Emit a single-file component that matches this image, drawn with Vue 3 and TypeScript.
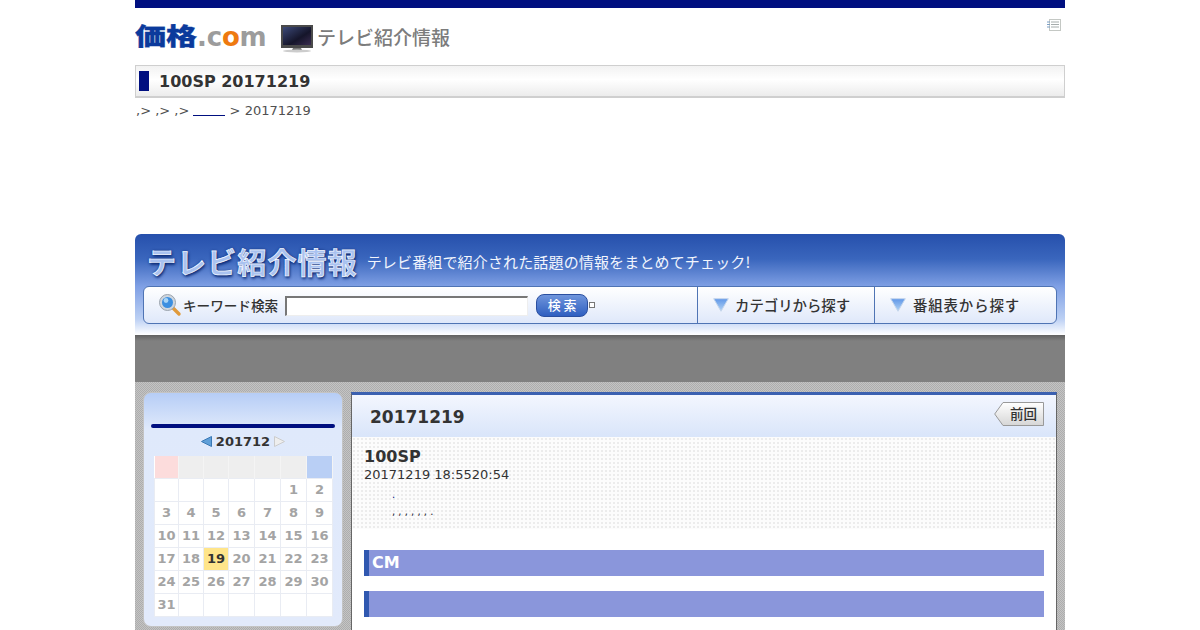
<script setup lang="ts">
const rows: (number | null)[][] = [
  [null, null, null, null, null, 1, 2],
  [3, 4, 5, 6, 7, 8, 9],
  [10, 11, 12, 13, 14, 15, 16],
  [17, 18, 19, 20, 21, 22, 23],
  [24, 25, 26, 27, 28, 29, 30],
  [31, null, null, null, null, null, null],
]
const heads = ['sun', '', '', '', '', '', 'sat']
</script>

<template>
  <div class="page">
    <div class="topbar"></div>
    <div class="logo-row">
      <div class="logo">
        <span class="kakaku">価格</span><span class="dotcom">.c<b>o</b>m</span>
      </div>
      <svg class="tv" width="34" height="30" viewBox="0 0 34 30">
        <defs>
          <linearGradient id="scr" x1="0" y1="0" x2="1" y2="1">
            <stop offset="0" stop-color="#3c4a78" />
            <stop offset="0.6" stop-color="#15152a" />
            <stop offset="1" stop-color="#3a2c50" />
          </linearGradient>
        </defs>
        <rect x="1" y="1" width="32" height="23" fill="#4a4a4a" />
        <rect x="3" y="3" width="28" height="18" fill="url(#scr)" />
        <path d="M13 24h8l1 2h-10z" fill="#777" />
        <ellipse cx="17" cy="27" rx="14" ry="1.5" fill="#ccc" />
      </svg>
      <span class="section-name">テレビ紹介情報</span>
      <svg class="memo" width="16" height="16" viewBox="0 0 16 16">
        <rect x="3.5" y="2.5" width="11" height="11" fill="#fff" stroke="#c4c8c4" />
        <path d="M5 5h8M5 7.5h8M5 10h8" stroke="#a6acac" />
        <path d="M1 5h3M1 7.5h3M1 10h3" stroke="#7d9fc4" />
      </svg>
    </div>
    <div class="title-bar">
      <span class="title-mark"></span>
      <h1>100SP 20171219</h1>
    </div>
    <div class="crumbs">,&gt; ,&gt; ,&gt; <a class="crumb-link"></a> &gt; 20171219</div>

    <header class="hero">
      <div class="hero-top">
        <span class="hero-title">テレビ紹介情報</span>
        <span class="hero-sub">テレビ番組で紹介された話題の情報をまとめてチェック!</span>
      </div>
      <div class="nav">
        <div class="nav-search">
          <svg class="lens" width="24" height="24" viewBox="0 0 24 24">
            <path d="M14 14l7 7" stroke="#e09a3c" stroke-width="3.4" stroke-linecap="round" />
            <circle cx="9.5" cy="9.5" r="8" fill="#cfd6de" stroke="#9aa3ad" />
            <circle cx="9.5" cy="9.5" r="5.5" fill="#3b8ee0" />
            <circle cx="8" cy="7.5" r="2.4" fill="#a8d4f6" />
          </svg>
          <span class="kw">キーワード検索</span>
          <span class="input"></span>
          <span class="btn">検 索</span>
          <span class="check"></span>
        </div>
        <div class="nav-item cat">
          <svg width="16" height="14" viewBox="0 0 16 14">
            <defs>
              <linearGradient id="tri" x1="0" y1="0" x2="0" y2="1">
                <stop offset="0" stop-color="#5f97e8" />
                <stop offset="1" stop-color="#b4d4f4" />
              </linearGradient>
            </defs>
            <path d="M0.7 0.7h14.6l-7.3 12.6z" fill="url(#tri)" stroke="#c4d6ec" />
          </svg>
          <span>カテゴリから探す</span>
        </div>
        <div class="nav-item prog">
          <svg width="16" height="14" viewBox="0 0 16 14">
            <path d="M0.7 0.7h14.6l-7.3 12.6z" fill="url(#tri)" stroke="#c4d6ec" />
          </svg>
          <span class="wide">番組表から探す</span>
        </div>
      </div>
    </header>

    <div class="band"></div>

    <main class="main">
      <aside class="side">
        <div class="side-rule"></div>
        <div class="month">
          <svg width="11" height="11" viewBox="0 0 11 11"><path d="M10.5 0.5v10L0.5 5.5z" fill="#5f9fd8" stroke="#3a78b4" /></svg>
          <span>201712</span>
          <svg width="11" height="11" viewBox="0 0 11 11"><path d="M0.5 0.5v10l10-5z" fill="#eee" stroke="#ccc" /></svg>
        </div>
        <table class="cal">
          <thead>
            <tr><th v-for="(h, i) in heads" :key="i" :class="h"></th></tr>
          </thead>
          <tbody>
            <tr v-for="(r, i) in rows" :key="i">
              <td v-for="(d, j) in r" :key="j" :class="{ today: d === 19 }">{{ d }}</td>
            </tr>
          </tbody>
        </table>
      </aside>

      <section class="content">
        <div class="content-head">
          <h2>20171219</h2>
          <span class="prev">
            <svg class="prev-shape" width="50" height="24" viewBox="0 0 50 24">
              <defs>
                <linearGradient id="pv" x1="0" y1="0" x2="0" y2="1">
                  <stop offset="0" stop-color="#ffffff" />
                  <stop offset="1" stop-color="#d6d6d6" />
                </linearGradient>
              </defs>
              <path d="M9 0.5h40.5v23H9L0.7 12z" fill="url(#pv)" stroke="#999" />
            </svg>
            <span class="prev-text">前回</span>
          </span>
        </div>
        <div class="info">
          <h3>100SP</h3>
          <p class="when">20171219 18:5520:54</p>
          <p class="dots first">.</p>
          <p class="dots">, , , , , , .</p>
        </div>
        <div class="bars">
          <div class="bar">CM</div>
          <div class="bar"></div>
        </div>
      </section>
    </main>
  </div>
</template>

<style scoped>
.page {
  width: 930px;
  height: 630px;
  margin: 0 auto;
  overflow: hidden;
  font-family: "DejaVu Sans", sans-serif;
  color: #333;
}
.topbar {
  height: 8px;
  background: #000f80;
}
.logo-row {
  height: 57px;
  display: flex;
  align-items: flex-start;
  position: relative;
}
.logo {
  width: 145px;
  height: 26px;
  margin-top: 15px;
  display: flex;
  align-items: flex-end;
  white-space: nowrap;
}
.kakaku {
  display: inline-block;
  width: 62px;
  font: 900 31px/26px "Noto Sans CJK JP", sans-serif;
  color: #0b3a9c;
  -webkit-text-stroke: 0.4px #0b3a9c;
  transform: scale(1, 0.78);
  transform-origin: 50% 30%;
}
.dotcom {
  font: 700 26px/26px "DejaVu Sans", sans-serif;
  color: #9c9c9c;
  letter-spacing: -0.2px;
  margin-bottom: -1px;
}
.dotcom b {
  color: #ee7a10;
}
.tv {
  margin-top: 16px;
}
.section-name {
  margin: 15px 0 0 3px;
  font: 500 19px/28px "Noto Sans CJK JP", sans-serif;
  color: #7c7c7c;
}
.memo {
  position: absolute;
  right: 3px;
  top: 9px;
}
.title-bar {
  height: 33px;
  box-sizing: border-box;
  display: flex;
  align-items: center;
  gap: 10px;
  padding: 0 0 1px 3px;
  border: 1px solid #cfcfcf;
  border-bottom-width: 2px;
  background: linear-gradient(#f2f2f2, #ffffff 45%, #ececec);
}
.title-mark {
  width: 10px;
  height: 20px;
  background: #000f80;
}
h1 {
  margin: 2px 0 0;
  font-size: 16px;
  line-height: 20px;
  font-weight: 700;
}
.crumbs {
  height: 136px;
  padding: 5px 0 0 1px;
  box-sizing: border-box;
  font-size: 13px;
  line-height: 15px;
  color: #505050;
}
.crumb-link {
  display: inline-block;
  width: 32px;
  height: 1px;
  background: #000f80;
  vertical-align: -1px;
}
.hero {
  height: 101px;
  box-sizing: border-box;
  padding: 0 8px;
  border-radius: 6px 6px 0 0;
  background: linear-gradient(#2650ac 0, #3a66bd 25px, #7e9fe4 52px, #bcd0f4 85px, #ffffff 101px);
}
.hero-top {
  height: 53px;
  display: flex;
  align-items: center;
  padding-left: 4px;
}
.hero-title {
  font: 700 29px/36px "Noto Sans CJK JP", sans-serif;
  color: #a9c2f0;
  -webkit-text-stroke: 0.7px #f6f9ff;
  letter-spacing: 1.1px;
  text-shadow: 0 0 3px #0c2a74, 1px 2px 3px #0c2a74;
}
.hero-sub {
  margin: 3px 0 0 9px;
  font: 400 15px/20px "Noto Sans CJK JP", sans-serif;
  letter-spacing: 0.15px;
  color: #f2f5fd;
  white-space: nowrap;
}
.nav {
  height: 38px;
  margin-top: -1px;
  display: flex;
  box-sizing: border-box;
  border: 1px solid #4f74b4;
  border-radius: 6px;
  background: linear-gradient(#ffffff, #dfe8fa);
}
.nav-search {
  width: 553px;
  display: flex;
  align-items: center;
  padding-left: 14px;
  box-sizing: border-box;
}
.lens {
  flex: none;
}
.kw {
  margin-left: 1px;
  font: 500 13.6px/20px "Noto Sans CJK JP", sans-serif;
  color: #333;
  white-space: nowrap;
}
.input {
  width: 240px;
  height: 17px;
  margin-left: 7px;
  margin-top: 1px;
  background: #fff;
  border: 1px solid #eee;
  border-top: 2px solid #777;
  border-left: 2px solid #777;
}
.btn {
  width: 52px;
  height: 23px;
  margin-left: 8px;
  border-radius: 8px;
  border: 1px solid #2a4fa0;
  box-sizing: border-box;
  background: linear-gradient(#6f95dc, #2f5fc0);
  color: #fff;
  font: 500 13px/20px "Noto Sans CJK JP", sans-serif;
  text-align: center;
}
.check {
  width: 4px;
  height: 4px;
  border: 1px solid #777;
  background: #fff;
  margin-left: 1px;
}
.nav-item {
  display: flex;
  align-items: center;
  border-left: 1px solid #4f74b4;
  box-sizing: border-box;
  padding: 0 0 1px 15px;
  gap: 6px;
  font: 500 14.4px/20px "Noto Sans CJK JP", sans-serif;
  color: #333;
  white-space: nowrap;
}
.cat {
  width: 177px;
}
.prog {
  flex: 1;
  gap: 7px;
}
.wide {
  letter-spacing: 0.9px;
}
.band {
  height: 47px;
  background: linear-gradient(#606060, #808080 6px);
}
.main {
  height: 248px;
  box-sizing: border-box;
  padding: 10px 8px 0;
  display: flex;
  gap: 8px;
  align-items: flex-start;
  background-color: #b9b9b9;
  background-image: conic-gradient(#adadad 25%, #c4c4c4 0 50%, #adadad 0 75%, #c4c4c4 0);
  background-size: 2px 2px;
}
.side {
  width: 200px;
  height: 235px;
  flex: none;
  box-sizing: border-box;
  padding: 31px 7px 0;
  border: 1px solid #c4c4c4;
  border-radius: 8px;
  background: linear-gradient(#b6cdf6, #dfe9fb 36px, #e2eafb);
}
.side-rule {
  height: 4px;
  border-radius: 2px;
  background: #000f80;
}
.month {
  height: 26px;
  padding-bottom: 2px;
  display: flex;
  align-items: center;
  justify-content: center;
  gap: 4px;
  font-size: 13px;
  font-weight: 700;
}
.cal {
  width: 178px;
  margin-left: 3px;
  border-collapse: collapse;
  table-layout: fixed;
  background: #fff;
}
.cal th {
  box-sizing: border-box;
  width: 26px;
  height: 22px;
  padding: 0;
  background: #eeeeee;
  border-right: 1px solid #f4f4f4;
}
.cal th:nth-child(1) {
  width: 24px;
}
.cal th:nth-child(2),
.cal th:nth-child(3) {
  width: 25px;
}
.cal th.sun {
  background: #fcdcdc;
}
.cal th.sat {
  background: #b9cff5;
}
.cal td {
  height: 22px;
  padding: 0;
  text-align: center;
  font-size: 13px;
  font-weight: 700;
  color: #a4a4a4;
  border: 1px solid #e9ecf3;
}
.cal td.today {
  background: #ffe58a;
  color: #333;
}
.content {
  flex: 1;
  height: 238px;
  background: #fff;
  border-top: 3px solid #3b60b0;
  border-left: 1px solid #666;
  border-right: 1px solid #666;
}
.content-head {
  height: 42px;
  display: flex;
  align-items: center;
  justify-content: space-between;
  padding: 2px 12px 0 18px;
  box-sizing: border-box;
  background: linear-gradient(#f3f6fe, #d9e5fa);
}
h2 {
  margin: 0;
  font-size: 17px;
  font-weight: 700;
}
.prev {
  position: relative;
  width: 50px;
  height: 24px;
  margin-top: -6px;
  display: block;
}
.prev-shape {
  display: block;
}
.prev-text {
  position: absolute;
  left: 16px;
  top: 0;
  font: 500 13.5px/23px "Noto Sans CJK JP", sans-serif;
  color: #333;
}
.info {
  height: 92px;
  box-sizing: border-box;
  padding: 10px 12px 0;
  background-color: #fcfcfc;
  background-image: radial-gradient(#ececec 0.9px, transparent 1px);
  background-size: 4px 4px;
}
h3 {
  margin: 0;
  font-size: 16px;
  line-height: 19px;
  font-weight: 700;
}
.when {
  margin: 0;
  font-size: 13px;
  line-height: 17px;
}
.dots {
  margin: 0 0 0 28px;
  font-size: 10px;
  line-height: 16px;
  color: #223;
}
.first {
  margin-top: 4px;
  margin-bottom: 1px;
  color: #000f80;
}
.bars {
  padding: 21px 12px 0;
  display: flex;
  flex-direction: column;
  gap: 15px;
}
.bar {
  height: 26px;
  box-sizing: border-box;
  padding-left: 3px;
  border-left: 5px solid #3058b0;
  background: #8a96db;
  color: #fff;
  font-size: 16px;
  font-weight: 700;
  line-height: 25px;
}
</style>
<style>
html, body { margin: 0; background: #fff; overflow: hidden; }
</style>
